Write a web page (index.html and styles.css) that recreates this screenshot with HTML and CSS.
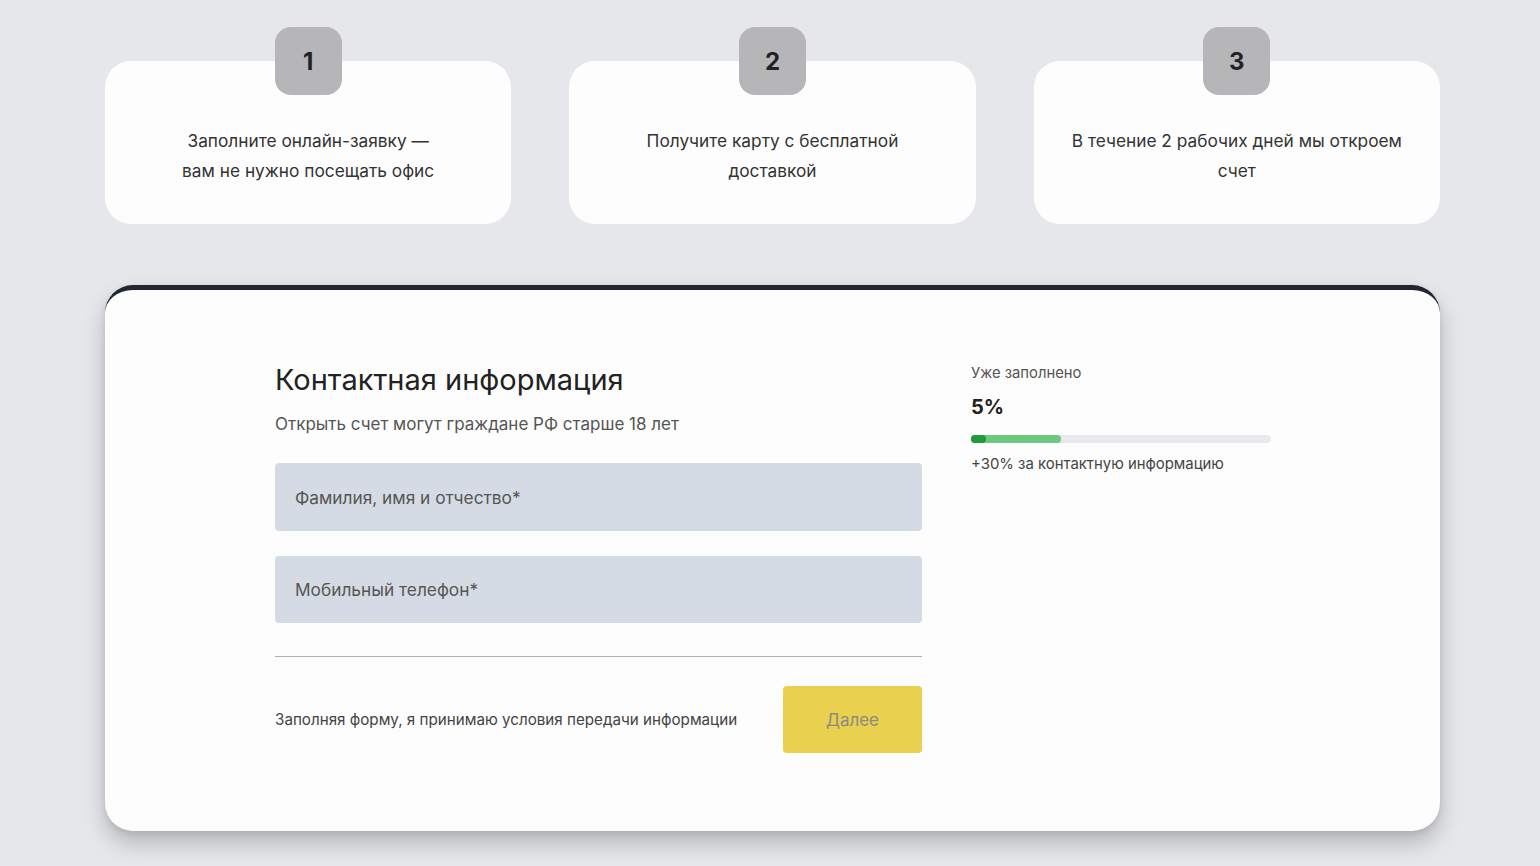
FILE: index.html
```html
<!DOCTYPE html>
<html lang="ru">
<head>
<meta charset="utf-8">
<title>Открыть счет</title>
<link rel="stylesheet" href="styles.css">
</head>
<body>
<div class="page">
  <section class="steps">
    <div class="step">
      <div class="badge">1</div>
      <p class="step-text">Заполните онлайн-заявку —<br>вам не нужно посещать офис</p>
    </div>
    <div class="step">
      <div class="badge">2</div>
      <p class="step-text">Получите карту с бесплатной<br>доставкой</p>
    </div>
    <div class="step">
      <div class="badge">3</div>
      <p class="step-text">В течение 2 рабочих дней мы откроем<br>счет</p>
    </div>
  </section>

  <section class="form-card">
    <div class="form-main">
      <h2 class="title">Контактная информация</h2>
      <p class="subtitle">Открыть счет могут граждане РФ старше 18 лет</p>
      <div class="field">Фамилия, имя и отчество*</div>
      <div class="field field-second">Мобильный телефон*</div>
      <div class="divider"></div>
      <div class="form-footer">
        <span class="terms">Заполняя форму, я принимаю условия передачи информации</span>
        <button class="next" type="button">Далее</button>
      </div>
    </div>
    <aside class="progress">
      <div class="progress-label">Уже заполнено</div>
      <div class="progress-value">5%</div>
      <div class="bar">
        <div class="bar-next" style="width:30%"></div>
        <div class="bar-done" style="width:5%"></div>
      </div>
      <div class="progress-note">+30% за контактную информацию</div>
    </aside>
  </section>
</div>
</body>
</html>
```

FILE: styles.css
```css
* { box-sizing: border-box; }

html, body {
  margin: 0;
  padding: 0;
  background: #e6e7eb;
  font-family: Inter, "Noto Sans", "Liberation Sans", sans-serif;
  color: #333;
}

.page {
  padding: 61px 100px 40px 105px;
}

.steps {
  display: grid;
  grid-template-columns: repeat(3, 1fr);
  column-gap: 58px;
}

.step {
  background: #fdfdfe;
  border-radius: 26px;
  height: 163px;
  display: flex;
  flex-direction: column;
  align-items: center;
}

.badge {
  margin-top: -34px;
  width: 67px;
  height: 68px;
  border-radius: 16px;
  background: #b6b6b8;
  color: #222;
  font-size: 24px;
  font-weight: 700;
  display: flex;
  align-items: center;
  justify-content: center;
}

.step-text {
  margin: 31px 0 0;
  text-align: center;
  font-size: 17.3px;
  line-height: 30px;
  color: #333;
}

.form-card {
  margin-top: 61px;
  background: #fdfdfd;
  border-top: 5px solid #222632;
  border-radius: 28px;
  box-shadow: 0 12px 22px rgba(0, 0, 0, 0.22), 0 2px 6px rgba(0, 0, 0, 0.08);
  padding: 72px 0 78px 170px;
  display: flex;
  gap: 49px;
}

.form-main {
  width: 647px;
  display: flex;
  flex-direction: column;
}

.title {
  margin: 0;
  font-size: 29px;
  line-height: 36px;
  font-weight: 400;
  color: #222;
}

.subtitle {
  margin: 14px 0 0;
  font-size: 17px;
  line-height: 24px;
  color: #555;
}

.field {
  margin-top: 27px;
  height: 68px;
  background: #d5dbe4;
  border-radius: 4px;
  padding-left: 20px;
  display: flex;
  align-items: center;
  font-size: 17.3px;
  color: #555;
}

.field-second {
  margin-top: 25px;
  height: 67px;
}

.divider {
  margin-top: 33px;
  height: 1px;
  background: #b0b0b2;
}

.form-footer {
  margin-top: 29px;
  display: flex;
  align-items: center;
  justify-content: space-between;
}

.terms {
  font-size: 15.2px;
  color: #444;
}

.next {
  width: 139px;
  height: 67px;
  border: 0;
  border-radius: 4px;
  background: #e9d04e;
  color: #8b8a80;
  font-family: inherit;
  font-size: 17px;
}

.progress {
  width: 300px;
  padding-top: 1px;
}

.progress-label {
  font-size: 14.8px;
  line-height: 20px;
  color: #555;
}

.progress-value {
  margin-top: 11px;
  font-size: 20px;
  line-height: 26px;
  font-weight: 700;
  color: #222;
}

.bar {
  margin-top: 15px;
  height: 8px;
  border-radius: 4px;
  background: #e8e9ed;
  position: relative;
}

.bar-next {
  height: 100%;
  border-radius: 4px;
  background: #6cc781;
}

.bar-done {
  position: absolute;
  left: 0;
  top: 0;
  height: 100%;
  border-radius: 4px;
  background: #1f9a3c;
}

.progress-note {
  margin-top: 11px;
  font-size: 14.9px;
  line-height: 20px;
  color: #444;
}
```
